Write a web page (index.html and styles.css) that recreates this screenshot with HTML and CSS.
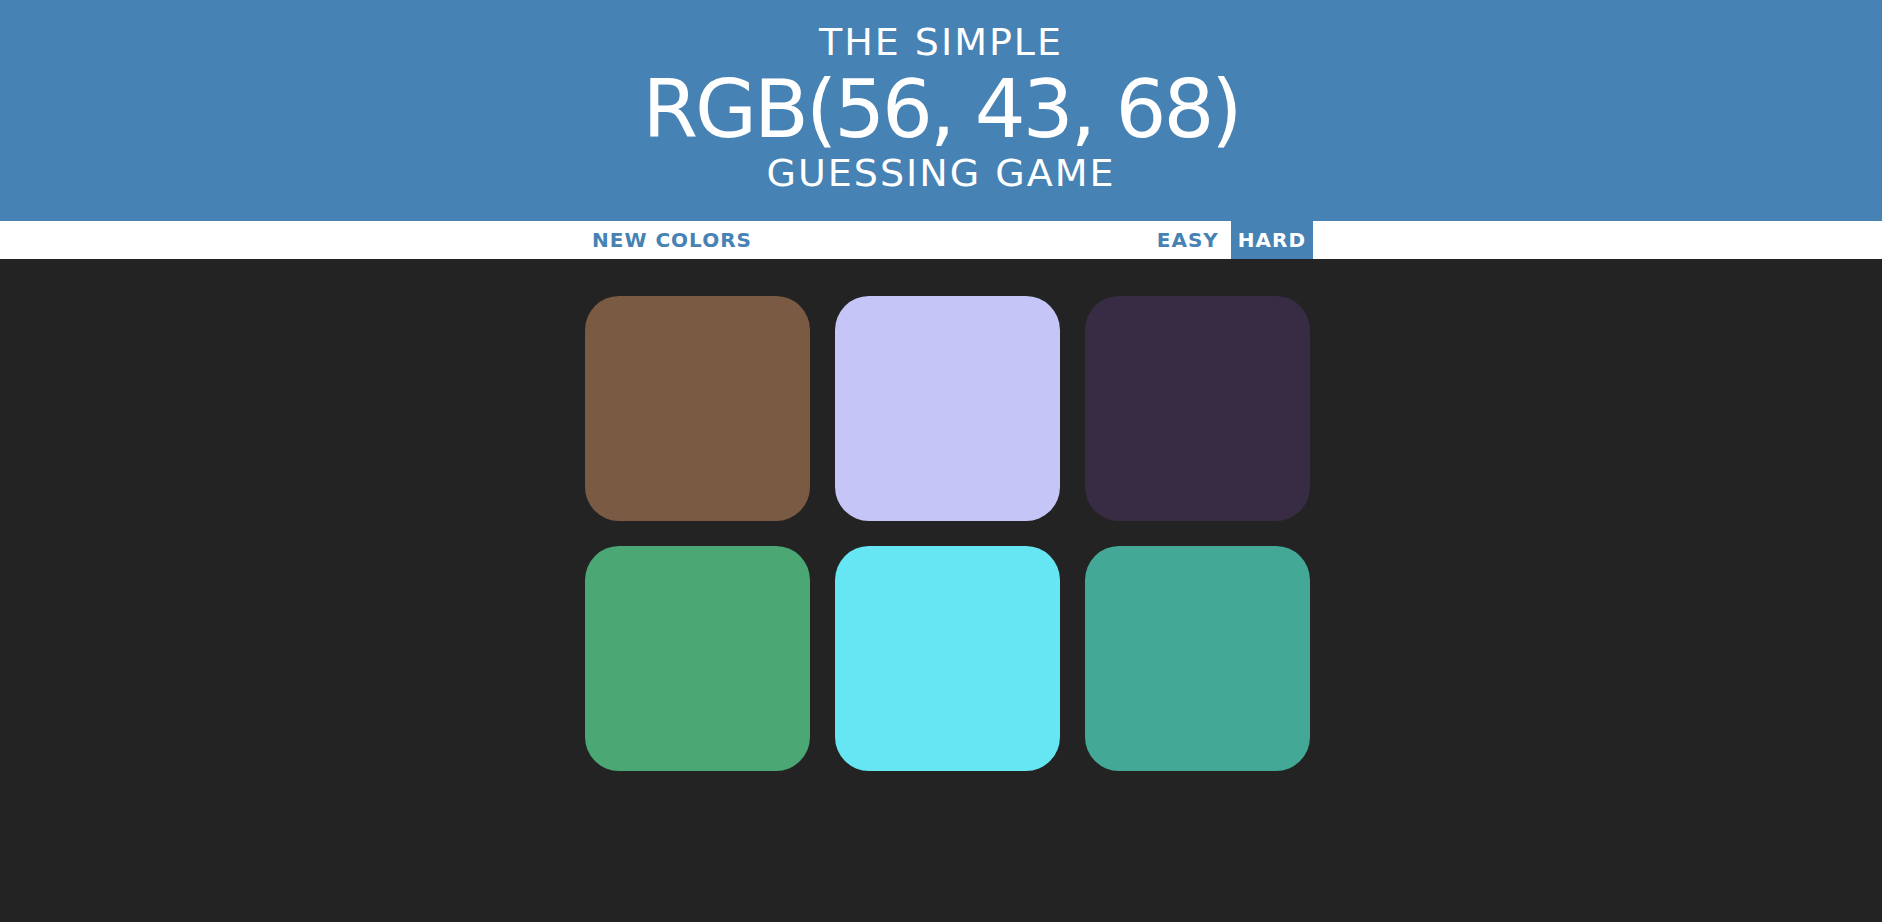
FILE: index.html
```html
<!DOCTYPE html>
<html lang="en">
<head>
<meta charset="utf-8">
<title>Color Game</title>
<link rel="stylesheet" href="styles.css">
</head>
<body>
<h1 class="title">
  <span class="line">The Simple</span>
  <span class="rgb">RGB(56, 43, 68)</span>
  <span class="line line-last">Guessing Game</span>
</h1>
<div class="stripe">
  <div class="container stripe-inner">
    <button class="btn">New Colors</button>
    <span class="message"></span>
    <div class="modes">
      <button class="btn">Easy</button>
      <button class="btn selected">Hard</button>
    </div>
  </div>
</div>
<div class="container">
  <div class="board">
    <div class="square" style="background: rgb(122, 90, 67)"></div>
    <div class="square" style="background: rgb(197, 197, 248)"></div>
    <div class="square" style="background: rgb(56, 43, 68)"></div>
    <div class="square" style="background: rgb(75, 168, 116)"></div>
    <div class="square" style="background: rgb(102, 230, 242)"></div>
    <div class="square" style="background: rgb(67, 169, 150)"></div>
  </div>
</div>
</body>
</html>
```
FILE: styles.css
```css
* { box-sizing: border-box; }
body {
  margin: 0;
  background: #232323;
  font-family: "DejaVu Sans", sans-serif;
}
.title {
  margin: 0;
  padding: 20px 0 30px;
  background: #4682b4;
  color: #fff;
  text-align: center;
  text-transform: uppercase;
  font-weight: normal;
}
.line {
  display: block;
  font-size: 38px;
  line-height: 44px;
  letter-spacing: 2px;
}
.line-last {
  line-height: 36px;
}
.rgb {
  display: block;
  font-size: 80px;
  line-height: 91px;
  letter-spacing: -3px;
}
.stripe {
  background: #fff;
  height: 38px;
}
.container {
  width: 728px;
  margin-left: calc(50% - 356px);
}
.stripe-inner {
  display: flex;
  height: 38px;
  align-items: stretch;
}
.message { flex: 1; }
.modes { display: flex; gap: 5px; }
.btn {
  border: none;
  background: #fff;
  color: #4682b4;
  font-family: inherit;
  font-weight: bold;
  font-size: 20px;
  letter-spacing: 1px;
  text-transform: uppercase;
  padding: 0 7px;
  height: 38px;
  margin: 0;
}
.btn.selected {
  background: #4682b4;
  color: #fff;
}
.board {
  margin-top: 37px;
  display: grid;
  grid-template-columns: repeat(3, 225px);
  grid-auto-rows: 225px;
  gap: 25px;
}
.square {
  border-radius: 34px;
}
```
